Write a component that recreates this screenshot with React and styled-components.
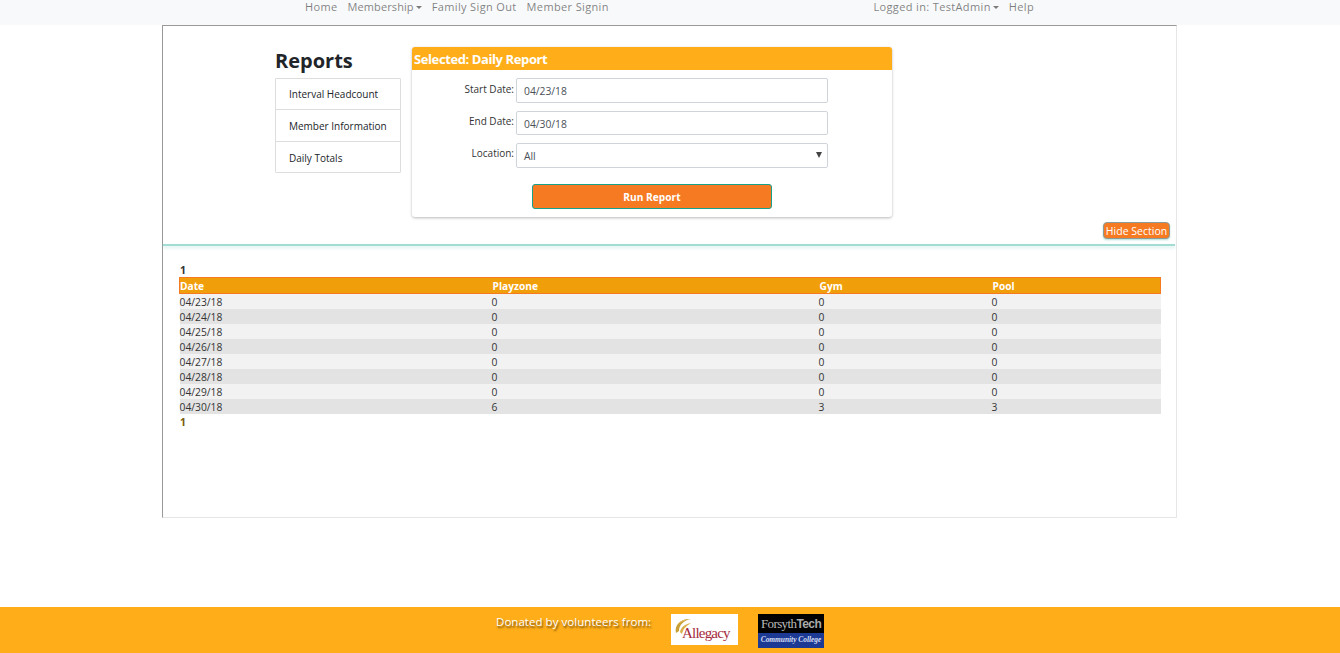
import React from 'react';
import styled, { createGlobalStyle } from 'styled-components';

const GlobalStyle = createGlobalStyle`
  html, body { margin: 0; padding: 0; background: #fff; }
  body {
    font-family: "Open Sans", "Noto Sans", sans-serif;
    font-size: 11px;
    color: #212529;
    height: 653px;
    overflow: hidden;
  }
`;

const Page = styled.div`
  height: 653px;
  display: flex;
  flex-direction: column;
`;

const Nav = styled.nav`
  height: 25px;
  flex: none;
  background: #f8f9fa;
  display: flex;
  justify-content: space-between;
  padding: 0 306px 0 305px;
  box-sizing: border-box;
`;

const NavGroup = styled.div`
  display: flex;
  gap: 10px;
  height: 13px;
  align-items: center;
`;

const NavLink = styled.a`
  color: rgba(0, 0, 0, 0.5);
  font-size: 11px;
  letter-spacing: ${p => p.$tight ? 0.1 : 0.36}px;
  white-space: nowrap;
  ${p => p.$caret && `
    &::after {
      content: "";
      display: inline-block;
      margin-left: 2px;
      vertical-align: 2px;
      border-top: 3px solid;
      border-left: 3px solid transparent;
      border-right: 3px solid transparent;
    }
  `}
`;

const Main = styled.main`
  width: 1015px;
  height: 493px;
  flex: none;
  margin-left: 162px;
  box-sizing: border-box;
  border: 1px solid #e6e6e6;
  border-top-color: #999;
  border-left-color: #999;
`;

const TopSection = styled.section`
  height: 218px;
  padding: 21px 0 0 112px;
  box-sizing: border-box;
  display: flex;
  gap: 11px;
  align-items: flex-start;
  position: relative;
`;

const Sidebar = styled.div`
  width: 126px;
`;

const Title = styled.h2`
  margin: 0;
  font-size: 20px;
  line-height: 27px;
  height: 31px;
  font-weight: 700;
  color: #212529;
`;

const SideList = styled.div`
  border: 1px solid #ddd;
  border-radius: 1px;
`;

const SideItem = styled.a`
  display: block;
  height: 30px;
  line-height: 30px;
  padding-left: 13px;
  font-size: 10px;
  color: #212529;
  box-sizing: border-box;
  & + & { border-top: 1px solid #ddd; height: 31px; line-height: 32px; }
  &:nth-child(2) { height: 32px; }
`;

const Card = styled.div`
  width: 480px;
  height: 170px;
  border-radius: 3px;
  background: #fff;
  box-shadow: 0 1px 3px rgba(0, 0, 0, 0.28);
  overflow: hidden;
`;

const CardHead = styled.div`
  height: 23px;
  line-height: 24px;
  background: #ffae19;
  color: #fff;
  font-size: 13px;
  letter-spacing: -0.4px;
  font-weight: 700;
  padding-left: 2px;
`;

const Form = styled.div`
  padding-top: 8px;
`;

const FormRow = styled.div`
  display: flex;
  align-items: flex-start;
  height: ${p => p.$h || 33}px;
`;

const Label = styled.label`
  width: 102px;
  text-align: right;
  font-size: 10px;
  line-height: ${p => p.$lh || 21}px;
  margin-right: 2px;
  color: #333;
`;

const Field = styled.div`
  width: 312px;
  height: ${p => p.$h || 25}px;
  line-height: 24px;
  box-sizing: border-box;
  border: 1px solid #ced4da;
  border-radius: 2px;
  padding-left: 7px;
  font-size: 10.3px;
  color: #495057;
  position: relative;
`;

const SelectArrow = styled.span`
  position: absolute;
  right: 5px;
  top: 8px;
  border-top: 6px solid #444;
  border-left: 3px solid transparent;
  border-right: 3px solid transparent;
`;

const RunButton = styled.button`
  display: block;
  width: 240px;
  height: 25px;
  margin: 8px 0 0 120px;
  border: 1px solid #17a08c;
  border-radius: 3px;
  background: #f67a22;
  color: #fff;
  font-family: inherit;
  font-size: 10.2px;
  font-weight: 700;
  padding: 0;
`;

const HideButton = styled.button`
  position: absolute;
  right: 6px;
  bottom: 5px;
  width: 67px;
  height: 17px;
  padding: 0;
  border: 1px solid #8c9a98;
  border-radius: 4px;
  background: #f67a22;
  color: #fff;
  font-family: inherit;
  font-size: 10.5px;
  line-height: 14px;
  box-shadow: 0 1px 2px rgba(23, 160, 140, 0.35);
`;

const Divider = styled.div`
  height: 2px;
  margin-right: 1px;
  background: #a3dcd2;
  box-shadow: 0 2px 3px rgba(163, 220, 210, 0.45);
`;

const TableSection = styled.section`
  padding: 18px 15px 0 16px;
`;

const Pager = styled.div`
  height: 13px;
  line-height: 13px;
  font-size: 10.5px;
  font-weight: 700;
  color: ${p => p.$bottom ? '#7a5a10' : '#333'};
  margin-top: ${p => p.$bottom ? 2 : 0}px;
  padding-left: 1px;
`;

const Table = styled.table`
  width: 982px;
  border-collapse: collapse;
  table-layout: fixed;
  font-size: 10.3px;
`;

const HeadCell = styled.th`
  background: #f09e09;
  color: #fff;
  font-weight: 700;
  font-size: 10.2px;
  text-align: left;
  height: 15px;
  box-sizing: border-box;
  padding: 1px 0 0 1px;
  border-top: 1px solid #f67a22;
  border-bottom: 1px solid #f67a22;
  line-height: 14px;
  &:first-child { border-left: 1px solid #f67a22; padding-left: 0; }
  &:last-child { border-right: 1px solid #f67a22; }
`;

const Row = styled.tr`
  background: ${p => p.$even ? '#e3e3e3' : '#f2f2f2'};
`;

const Cell = styled.td`
  height: 15px;
  padding: 1px 0 0;
  box-sizing: border-box;
  line-height: 14px;
  color: #333;
`;

const Footer = styled.footer`
  margin-top: 89px;
  height: 46px;
  flex: none;
  background: #ffae19;
  display: flex;
  padding-left: 496px;
  box-sizing: border-box;
`;

const FooterText = styled.div`
  color: #fff;
  font-size: 11.5px;
  letter-spacing: 0.04px;
  line-height: 30px;
  width: 175px;
  text-shadow: 1px 2px 2px rgba(0, 0, 0, 0.6);
`;

const AllegacyLogo = styled.div`
  width: 67px;
  height: 31px;
  margin-top: 7px;
  background: #fff;
  display: flex;
  flex: none;
`;

const ForsythLogo = styled.div`
  width: 66px;
  height: 34px;
  margin: 7px 0 0 20px;
  flex: none;
  display: flex;
  flex-direction: column;
  font-family: "Liberation Serif", serif;
  text-align: center;
`;

const ForsythTop = styled.div`
  height: 19px;
  line-height: 20px;
  background: #000;
  color: #bbb;
  font-size: 13px;
  letter-spacing: -0.6px;
  white-space: nowrap;
  b { font-family: "Liberation Sans", sans-serif; font-size: 12px; color: #aaa; }
`;

const ForsythBottom = styled.div`
  height: 15px;
  line-height: 14px;
  background: #1c3a94;
  color: #d8def5;
  font-size: 7.4px;
  font-weight: 700;
  font-style: italic;
  white-space: nowrap;
`;

const rows = [
  ['04/23/18', 0, 0, 0],
  ['04/24/18', 0, 0, 0],
  ['04/25/18', 0, 0, 0],
  ['04/26/18', 0, 0, 0],
  ['04/27/18', 0, 0, 0],
  ['04/28/18', 0, 0, 0],
  ['04/29/18', 0, 0, 0],
  ['04/30/18', 6, 3, 3],
];

const App = () => (
  <Page>
    <GlobalStyle />
    <Nav>
      <NavGroup>
        <NavLink>Home</NavLink>
        <NavLink $caret $tight>Membership</NavLink>
        <NavLink>Family Sign Out</NavLink>
        <NavLink>Member Signin</NavLink>
      </NavGroup>
      <NavGroup>
        <NavLink $caret>Logged in: TestAdmin</NavLink>
        <NavLink>Help</NavLink>
      </NavGroup>
    </Nav>
    <Main>
      <TopSection>
        <Sidebar>
          <Title>Reports</Title>
          <SideList>
            <SideItem>Interval Headcount</SideItem>
            <SideItem>Member Information</SideItem>
            <SideItem>Daily Totals</SideItem>
          </SideList>
        </Sidebar>
        <Card>
          <CardHead>Selected: Daily Report</CardHead>
          <Form>
            <FormRow><Label $lh={22}>Start Date:</Label><Field>04/23/18</Field></FormRow>
            <FormRow $h={32}><Label>End Date:</Label><Field $h={24}>04/30/18</Field></FormRow>
            <FormRow><Label $lh={20}>Location:</Label><Field>All<SelectArrow /></Field></FormRow>
          </Form>
          <RunButton>Run Report</RunButton>
        </Card>
        <HideButton>Hide Section</HideButton>
      </TopSection>
      <Divider />
      <TableSection>
        <Pager>1</Pager>
        <Table>
          <colgroup>
            <col style={{ width: 312 }} />
            <col style={{ width: 327 }} />
            <col style={{ width: 173 }} />
            <col />
          </colgroup>
          <thead>
            <tr>
              <HeadCell>Date</HeadCell>
              <HeadCell>Playzone</HeadCell>
              <HeadCell>Gym</HeadCell>
              <HeadCell>Pool</HeadCell>
            </tr>
          </thead>
          <tbody>
            {rows.map((r, i) => (
              <Row key={r[0]} $even={i % 2 === 1}>
                <Cell>{r[0]}</Cell>
                <Cell>{r[1]}</Cell>
                <Cell>{r[2]}</Cell>
                <Cell>{r[3]}</Cell>
              </Row>
            ))}
          </tbody>
        </Table>
        <Pager $bottom>1</Pager>
      </TableSection>
    </Main>
    <Footer>
      <FooterText>Donated by volunteers from:</FooterText>
      <AllegacyLogo>
        <svg width="67" height="31" viewBox="0 0 67 31">
          <path d="M5 19 C3 11 10 4 20 5 C13 6 8 11 8 17 Z" fill="#c9a035" />
          <path d="M9 18 C10 13 14 10 20 9 C15 12 12 15 11 20 Z" fill="#d9b04a" />
          <path d="M7 10 C9 8 11 7 14 6" fill="none" stroke="#e3c068" strokeWidth="1" />
          <text x="11" y="24" fontFamily="Liberation Serif, serif" fontSize="15" fill="#a52a3c" letterSpacing="-0.8">Allegacy</text>
        </svg>
      </AllegacyLogo>
      <ForsythLogo>
        <ForsythTop>Forsyth<b>Tech</b></ForsythTop>
        <ForsythBottom>Community College</ForsythBottom>
      </ForsythLogo>
    </Footer>
  </Page>
);

export default App;
